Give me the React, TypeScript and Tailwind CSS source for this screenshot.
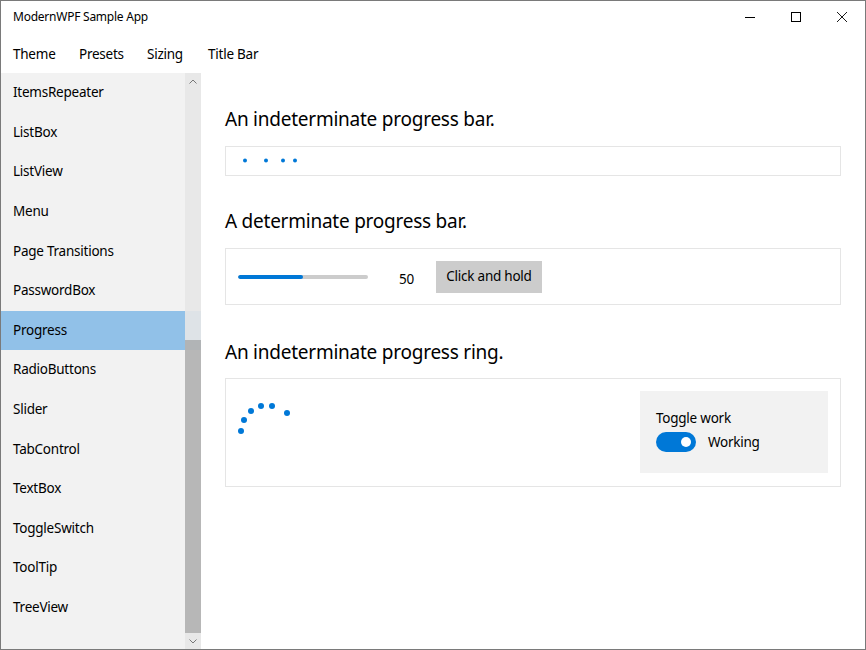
import React from "react";

const items = [
  "ItemsRepeater",
  "ListBox",
  "ListView",
  "Menu",
  "Page Transitions",
  "PasswordBox",
  "Progress",
  "RadioButtons",
  "Slider",
  "TabControl",
  "TextBox",
  "ToggleSwitch",
  "ToolTip",
  "TreeView",
];

const font = { fontFamily: '"Segoe UI", "Noto Sans", sans-serif' };

export default function App() {
  return (
    <div
      className="w-[866px] h-[650px] border border-[#7a7a7a] bg-white flex flex-col overflow-hidden text-[#000] tracking-[-0.015em]"
      style={font}
    >
      {/* Title bar */}
      <div className="h-[32px] flex items-center shrink-0">
        <div className="pl-[12px] text-[12px] flex-1">ModernWPF Sample App</div>
        <div className="flex h-full">
          <div className="w-[46px] h-full flex items-center justify-center">
            <svg width="10" height="10" viewBox="0 0 10 10">
              <line x1="0" y1="5.5" x2="10" y2="5.5" stroke="#000" strokeWidth="1" />
            </svg>
          </div>
          <div className="w-[46px] h-full flex items-center justify-center">
            <svg width="10" height="10" viewBox="0 0 10 10">
              <rect x="0.5" y="0.5" width="9" height="9" fill="none" stroke="#000" strokeWidth="1" />
            </svg>
          </div>
          <div className="w-[46px] h-full flex items-center justify-center">
            <svg width="10" height="10" viewBox="0 0 10 10">
              <path d="M0 0 L10 10 M10 0 L0 10" stroke="#000" strokeWidth="0.9" />
            </svg>
          </div>
        </div>
      </div>
      {/* Menu */}
      <div className="h-[40px] flex items-center shrink-0 text-[13.5px] pt-[3px]">
        <span className="pl-[12px] w-[78px]">Theme</span>
        <span className="w-[68px]">Presets</span>
        <span className="w-[61px]">Sizing</span>
        <span>Title Bar</span>
      </div>
      {/* Body */}
      <div className="flex flex-1 min-h-0">
        <div className="w-[200px] relative bg-[#f2f2f2] shrink-0">
          <div className="flex flex-col">
            {items.map((it) => (
              <div
                key={it}
                className={
                  "h-[39.6px] flex items-center pl-[12px] pb-[1px] text-[13.5px] " +
                  (it === "Progress" ? "bg-[#91c1e8]" : "")
                }
              >
                {it}
              </div>
            ))}
          </div>
          {/* Scrollbar overlay */}
          <div className="absolute top-0 right-0 bottom-0 w-[16px] flex flex-col">
            <div className="h-[16px] bg-[#e8e8e8] flex items-center justify-center">
              <svg width="8" height="5" viewBox="0 0 8 5">
                <path d="M0.5 4.5 L4 1 L7.5 4.5" fill="none" stroke="#777" strokeWidth="1" />
              </svg>
            </div>
            <div className="h-[251px] bg-[#e7e7e7]/90"></div>
            <div className="flex-1 bg-[#b3b3b3]/95"></div>
            <div className="h-[16px] bg-[#e8e8e8] flex items-center justify-center">
              <svg width="8" height="5" viewBox="0 0 8 5">
                <path d="M0.5 0.5 L4 4 L7.5 0.5" fill="none" stroke="#777" strokeWidth="1" />
              </svg>
            </div>
          </div>
        </div>

        {/* Content */}
        <div className="flex-1 pl-[24px] pr-[24px] flex flex-col">
          <div className="mt-[32px] mb-[13px] text-[19px] leading-[28px]">
            An indeterminate progress bar.
          </div>
          <div className="h-[30px] border border-[#e5e5e5]">
            <svg width="100" height="28" viewBox="0 0 100 28">
              {[19, 40, 57, 69].map((x) => (
                <circle key={x} cx={x} cy="13.5" r="2" fill="#0078d7" />
              ))}
            </svg>
          </div>

          <div className="mt-[31px] mb-[13px] text-[19px] leading-[28px]">
            A determinate progress bar.
          </div>
          <div className="h-[57px] border border-[#e5e5e5] flex items-center pl-[12px]">
            <div className="w-[130px] h-[4px] rounded-full bg-[#cccccc] overflow-hidden">
              <div className="w-[65px] h-full bg-[#0078d7] rounded-full"></div>
            </div>
            <span className="ml-[31px] w-[37px] text-[13.5px] leading-[20px] mt-[4px]">50</span>
            <div className="w-[106px] h-[32px] bg-[#cccccc] flex items-center justify-center text-[13.5px]">
              Click and hold
            </div>
          </div>

          <div className="mt-[33px] mb-[12px] text-[19px] leading-[28px]">
            An indeterminate progress ring.
          </div>
          <div className="h-[109px] border border-[#e5e5e5] flex justify-between pl-[12px] pr-[12px] pt-[12px]">
            <svg width="80" height="60" viewBox="0 0 80 60">
              {[
                [3, 40],
                [6, 29],
                [13, 20],
                [23, 15],
                [34, 15],
                [49, 22],
              ].map(([x, y]) => (
                <circle key={x} cx={x} cy={y} r="3" fill="#0078d7" />
              ))}
            </svg>
            <div className="w-[188px] h-[82px] bg-[#f2f2f2] pl-[16px] pt-[17px] text-[13.5px]">
              <div className="leading-[20px]">Toggle work</div>
              <div className="flex items-center mt-[4px]">
                <div className="w-[40px] h-[20px] rounded-full bg-[#0078d7] flex items-center justify-end pr-[5px]">
                  <div className="w-[10px] h-[10px] rounded-full bg-white"></div>
                </div>
                <span className="ml-[12px] leading-[20px]">Working</span>
              </div>
            </div>
          </div>
        </div>
      </div>
    </div>
  );
}
